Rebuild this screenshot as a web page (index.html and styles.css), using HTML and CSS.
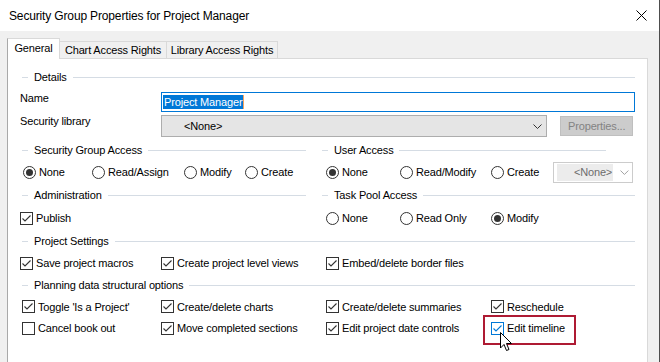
FILE: index.html
```html
<!DOCTYPE html>
<html>
<head>
<meta charset="utf-8">
<link rel="stylesheet" href="styles.css">
</head>
<body>
<svg class="defs" width="0" height="0" aria-hidden="true">
  <defs>
    <symbol id="cb-on" viewBox="0 0 13 13"><rect x="0.5" y="0.5" width="12" height="12" fill="#fff" stroke="#333"/><polyline points="2.5,6.5 5,9 10.5,3.5" fill="none" stroke="#333" stroke-width="1.1"/></symbol>
    <symbol id="cb-hot" viewBox="0 0 13 13"><rect x="0.5" y="0.5" width="12" height="12" fill="#fff" stroke="#0078d7"/><polyline points="2.5,6.5 5,9 10.5,3.5" fill="none" stroke="#0078d7" stroke-width="1.1"/></symbol>
    <symbol id="cb-off" viewBox="0 0 13 13"><rect x="0.5" y="0.5" width="12" height="12" fill="#fff" stroke="#333"/></symbol>
    <symbol id="rb-on" viewBox="0 0 13 13"><circle cx="6.5" cy="6.5" r="6" fill="#fff" stroke="#333"/><circle cx="6.5" cy="6.5" r="3.5" fill="#333"/></symbol>
    <symbol id="rb-off" viewBox="0 0 13 13"><circle cx="6.5" cy="6.5" r="6" fill="#fff" stroke="#333"/></symbol>
  </defs>
</svg>
<div class="window">
  <div class="titlebar">
    <span class="title">Security Group Properties for Project Manager</span>
    <svg class="close" width="11" height="11" viewBox="0 0 11 11"><path d="M0.5 0.5 L10.5 10.5 M10.5 0.5 L0.5 10.5" stroke="#000" stroke-width="1" fill="none"/></svg>
  </div>
  <div class="tabs">
    <div class="tab active">General</div>
    <div class="tab tab-chart">Chart Access Rights</div>
    <div class="tab tab-lib">Library Access Rights</div>
  </div>
  <div class="page">
    <div class="hdr hdr-first"><span class="dash"></span><span class="hdr-text">Details</span><span class="rule"></span></div>
    <div class="field name-row">
      <span class="label">Name</span>
      <div class="textbox"><span class="sel">Project Manager</span></div>
    </div>
    <div class="field lib-row">
      <span class="label">Security library</span>
      <div class="combo">
        <span class="combo-text">&lt;None&gt;</span>
        <svg class="chev" width="9" height="5" viewBox="0 0 9 5"><polyline points="0.5,0.5 4.5,4.5 8.5,0.5" fill="none" stroke="#333"/></svg>
      </div>
      <div class="btn">Properties...</div>
    </div>

    <div class="cols">
      <div class="col">
        <div class="hdr"><span class="dash"></span><span class="hdr-text">Security Group Access</span><span class="rule"></span></div>
        <div class="row radios-sga">
          <span class="opt"><svg><use href="#rb-on"/></svg>None</span>
          <span class="opt"><svg><use href="#rb-off"/></svg>Read/Assign</span>
          <span class="opt"><svg><use href="#rb-off"/></svg>Modify</span>
          <span class="opt"><svg><use href="#rb-off"/></svg>Create</span>
        </div>
        <div class="hdr hdr-gap"><span class="dash"></span><span class="hdr-text">Administration</span><span class="rule"></span></div>
        <div class="row row-gap">
          <span class="opt"><svg><use href="#cb-on"/></svg>Publish</span>
        </div>
      </div>
      <div class="col">
        <div class="hdr"><span class="dash"></span><span class="hdr-text">User Access</span><span class="rule rule-short"></span></div>
        <div class="row radios-user">
          <span class="opt"><svg><use href="#rb-on"/></svg>None</span>
          <span class="opt"><svg><use href="#rb-off"/></svg>Read/Modify</span>
          <span class="opt"><svg><use href="#rb-off"/></svg>Create</span>
          <div class="mini-combo">
            <span class="mini-text">&lt;None&gt;</span>
            <svg class="mini-chev" width="9" height="5" viewBox="0 0 9 5"><polyline points="0.5,0.5 4.5,4.5 8.5,0.5" fill="none" stroke="#a0a0a0"/></svg>
          </div>
        </div>
        <div class="hdr hdr-gap"><span class="dash"></span><span class="hdr-text">Task Pool Access</span><span class="rule"></span></div>
        <div class="row row-gap radios-pool">
          <span class="opt"><svg><use href="#rb-off"/></svg>None</span>
          <span class="opt"><svg><use href="#rb-off"/></svg>Read Only</span>
          <span class="opt"><svg><use href="#rb-on"/></svg>Modify</span>
        </div>
      </div>
    </div>

    <div class="hdr hdr-ps"><span class="dash"></span><span class="hdr-text">Project Settings</span><span class="rule"></span></div>
    <div class="row checks-ps">
      <span class="opt"><svg><use href="#cb-on"/></svg>Save project macros</span>
      <span class="opt"><svg><use href="#cb-on"/></svg>Create project level views</span>
      <span class="opt"><svg><use href="#cb-on"/></svg>Embed/delete border files</span>
    </div>

    <div class="hdr hdr-pd"><span class="dash"></span><span class="hdr-text">Planning data structural options</span><span class="rule"></span></div>
    <div class="row checks-pd row-a">
      <span class="opt"><svg><use href="#cb-on"/></svg>Toggle 'Is a Project'</span>
      <span class="opt"><svg><use href="#cb-on"/></svg>Create/delete charts</span>
      <span class="opt"><svg><use href="#cb-on"/></svg>Create/delete summaries</span>
      <span class="opt"><svg><use href="#cb-on"/></svg>Reschedule</span>
    </div>
    <div class="row checks-pd row-b">
      <span class="opt"><svg><use href="#cb-off"/></svg>Cancel book out</span>
      <span class="opt"><svg><use href="#cb-on"/></svg>Move completed sections</span>
      <span class="opt"><svg><use href="#cb-on"/></svg>Edit project date controls</span>
      <span class="opt highlight"><svg><use href="#cb-hot"/></svg>Edit timeline
        <svg class="cursor" width="13" height="20" viewBox="0 0 13 20"><path d="M0.5 0.5 L0.5 16 L4 12.5 L6.5 18.5 L9 17.5 L6.5 11.5 L11.5 11.5 Z" fill="#fff" stroke="#000" stroke-width="1" stroke-linejoin="round"/></svg>
      </span>
    </div>
  </div>
</div>
</body>
</html>
```

FILE: styles.css
```css
* { box-sizing: border-box; }
html, body { margin: 0; padding: 0; }
body {
  width: 660px;
  height: 362px;
  overflow: hidden;
  background: #f0f0f0;
  font-family: "Liberation Sans", Arial, sans-serif;
  font-size: 11px;
  letter-spacing: -0.15px;
  color: #000;
}
.defs { position: absolute; width: 0; height: 0; overflow: hidden; }

.window {
  width: 660px;
  height: 362px;
  background: #f0f0f0;
  border-right: 1px solid #4d4d4d;
  overflow: hidden;
}

.titlebar {
  height: 31px;
  background: #fff;
  display: flex;
  align-items: center;
  padding-left: 9px;
  padding-right: 12px;
}
.title { font-size: 12px; flex: 1; }
.close { display: block; }

.tabs {
  height: 27px;
  display: flex;
  align-items: flex-end;
  padding-left: 7px;
}
.tab {
  height: 17px;
  background: #f0f0f0;
  border: 1px solid #d9d9d9;
  border-bottom: none;
  display: flex;
  align-items: center;
  justify-content: center;
  white-space: nowrap;
}
.tab.active {
  position: relative;
  z-index: 2;
  height: 21px;
  width: 53px;
  margin-bottom: -1px;
  background: #fff;
  border-left-color: #a9a9a9;
  padding-bottom: 3px;
}
.tab-chart { width: 107px; border-left: none; }
.tab-lib { width: 111px; border-left: none; }

.page {
  margin-left: 7px;
  width: 641px;
  height: 320px;
  background: #fff;
  border: 1px solid #d9d9d9;
  border-left-color: #a9a9a9;
  padding: 0 12px;
}

.hdr {
  display: flex;
  align-items: center;
  height: 16px;
}
.hdr-first { margin-top: 10px; }
.dash { width: 6px; height: 1px; background: #d5dce4; margin-left: 2px; }
.hdr-text { margin: 0 6px; white-space: nowrap; }
.rule { flex: 1; height: 1px; background: #d5dce4; }
.rule-short { margin-right: 29px; }

.field { display: flex; align-items: flex-start; }
.label { width: 141px; line-height: 13px; }
.name-row { margin-top: 7px; height: 20px; }
.lib-row { margin-top: 3px; height: 22px; }

.textbox {
  width: 474px;
  height: 20px;
  border: 1px solid #0078d7;
  padding: 2px 1px;
  display: flex;
}
.sel {
  background: #0078d7;
  color: #fff;
  height: 14px;
  line-height: 14px;
  padding: 0 1px;
  border-right: 1px solid #f7a35c;
}

.combo {
  width: 386px;
  height: 22px;
  background: #e5e5e5;
  border: 1px solid #adadad;
  display: flex;
  align-items: center;
  padding-left: 22px;
  padding-right: 4px;
}
.combo-text { flex: 1; }
.chev { display: block; }

.btn {
  margin-left: 13px;
  margin-top: 1px;
  width: 73px;
  height: 20px;
  background: #cccccc;
  border: 1px solid #bfbfbf;
  color: #838383;
  display: flex;
  align-items: center;
  padding-left: 7px;
}

.cols {
  display: grid;
  grid-template-columns: 286px 1fr;
  column-gap: 14px;
  margin-top: 5px;
}

.row { display: grid; height: 22px; align-items: center; margin-top: 3px; }
.hdr-gap { margin-top: 4px; }
.row-gap { margin-top: 4px; }

.opt {
  display: flex;
  align-items: center;
  gap: 3px;
  white-space: nowrap;
}
.opt svg { width: 13px; height: 13px; flex: none; }

.radios-sga { grid-template-columns: 69px 92px 61px auto; padding-left: 3px; }
.radios-user { grid-template-columns: 74px 91px 62px auto; padding-left: 6px; }
.radios-pool { grid-template-columns: 74px 91px auto; padding-left: 6px; }

.mini-combo {
  width: 80px;
  height: 21px;
  border: 1px solid #cccccc;
  background: #fff;
  display: flex;
  align-items: center;
  padding: 1px 3px 1px 3px;
}
.mini-text {
  width: 57px;
  height: 17px;
  background: #ececec;
  color: #6d6d6d;
  display: flex;
  align-items: center;
  justify-content: flex-end;
  padding-right: 1px;
}
.mini-chev { margin-left: 7px; display: block; }

.hdr-ps { margin-top: 4px; }
.checks-ps { grid-template-columns: 141px 165px auto; }
.hdr-pd { margin-top: 3px; }
.checks-pd { grid-template-columns: 139px 165px 165px auto; padding-left: 2px; }
.row-a { height: 21px; }
.row-b { margin-top: 0; }

.highlight { position: relative; }
.highlight::after {
  content: "";
  position: absolute;
  left: -8px;
  top: -7px;
  width: 89px;
  height: 26px;
  border: 2px solid #ae1a33;
}
.opt .cursor {
  position: absolute;
  left: 9px;
  top: 10px;
  width: 13px;
  height: 20px;
  z-index: 3;
}
```
